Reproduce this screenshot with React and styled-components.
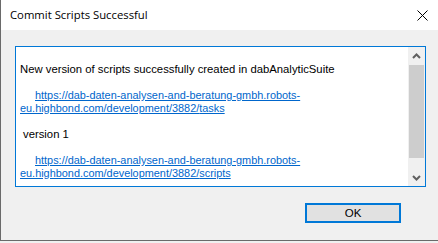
import React from 'react';
import styled, { createGlobalStyle } from 'styled-components';

const GlobalStyle = createGlobalStyle`
  html, body {
    margin: 0;
    padding: 0;
    background: #f0f0f0;
  }
  body {
    width: 438px;
    height: 243px;
    overflow: hidden;
  }
`;

const Window = styled.div`
  width: 438px;
  height: 241px;
  box-sizing: border-box;
  border-left: 1px solid #6a6a6a;
  border-bottom: 1px solid #6a6a6a;
  background: #f0f0f0;
  display: flex;
  flex-direction: column;
`;

const TitleBar = styled.div`
  height: 30px;
  background: #ffffff;
  display: flex;
  align-items: center;
  justify-content: space-between;
  padding: 0 10px 0 9px;
`;

const Title = styled.span`
  font-family: "Open Sans", "Noto Sans", sans-serif;
  font-size: 11.3px;
  color: #000;
  margin-top: -1px;
`;

const CloseBtn = styled.div`
  width: 11px;
  height: 11px;
  display: flex;
`;

const Body = styled.div`
  flex: 1;
  display: flex;
  flex-direction: column;
  padding: 16px 0 0 14px;
`;

const TextBox = styled.div`
  width: 411px;
  height: 141px;
  box-sizing: border-box;
  border: 1px solid #0078d7;
  background: #ffffff;
  display: flex;
`;

const Content = styled.div`
  flex: 1;
  overflow: hidden;
  padding: 3px 0 0 4px;
  font-family: "Liberation Sans", Arial, sans-serif;
  font-size: 11.3px;
  line-height: 13px;
  color: #000;
`;

const Line = styled.div`
  height: 13px;
  white-space: nowrap;
  padding-left: ${p => p.indent || 0}px;
`;

const Link = styled.a`
  color: #0066cc;
  text-decoration: underline;
  display: block;
  font-size: 10.9px;
  white-space: nowrap;
`;

const LinkLine = styled.span`
  display: block;
  height: 13px;
  padding-left: ${p => p.indent || 0}px;
`;

const ScrollBar = styled.div`
  width: 17px;
  background: #f0f0f0;
  display: flex;
  flex-direction: column;
`;

const ArrowBtn = styled.div`
  height: 17px;
  display: flex;
  align-items: center;
  justify-content: center;
`;

const Track = styled.div`
  flex: 1;
  padding: 1px 1px 0 1px;
`;

const Thumb = styled.div`
  height: 93px;
  background: #cdcdcd;
`;

const ButtonRow = styled.div`
  display: flex;
  justify-content: flex-end;
  padding: 16px 37px 0 0;
`;

const OkButton = styled.button`
  width: 96px;
  height: 20px;
  box-sizing: border-box;
  border: 2px solid #0078d7;
  background: #e1e1e1;
  font-family: "Liberation Sans", Arial, sans-serif;
  font-size: 11.5px;
  color: #000;
  padding: 0;
  display: flex;
  align-items: center;
  justify-content: center;
`;

const Chevron = ({ up }) => (
  <svg width="9" height="6" viewBox="0 0 9 6">
    <path
      d={up ? 'M1 5 L4.5 1.5 L8 5' : 'M1 1 L4.5 4.5 L8 1'}
      fill="none"
      stroke="#606060"
      strokeWidth="2"
    />
  </svg>
);

const UrlLink = ({ path }) => (
  <Link href="#">
    <LinkLine indent={15}>https://dab-daten-analysen-and-beratung-gmbh.robots-</LinkLine>
    <LinkLine>eu.highbond.com/development/3882/{path}</LinkLine>
  </Link>
);

export default function App() {
  return (
    <>
      <GlobalStyle />
      <Window>
        <TitleBar>
          <Title>Commit Scripts Successful</Title>
          <CloseBtn>
            <svg width="11" height="11" viewBox="0 0 11 11">
              <path d="M0.5 0.5 L10.5 10.5 M10.5 0.5 L0.5 10.5" stroke="#000" strokeWidth="1" />
            </svg>
          </CloseBtn>
        </TitleBar>
        <Body>
          <TextBox>
            <Content>
              <Line />
              <Line>New version of scripts successfully created in dabAnalyticSuite</Line>
              <Line />
              <UrlLink path="tasks" />
              <Line />
              <Line indent={3}>version 1</Line>
              <Line />
              <UrlLink path="scripts" />
            </Content>
            <ScrollBar>
              <ArrowBtn><Chevron up /></ArrowBtn>
              <Track><Thumb /></Track>
              <ArrowBtn><Chevron /></ArrowBtn>
            </ScrollBar>
          </TextBox>
          <ButtonRow>
            <OkButton>OK</OkButton>
          </ButtonRow>
        </Body>
      </Window>
    </>
  );
}
